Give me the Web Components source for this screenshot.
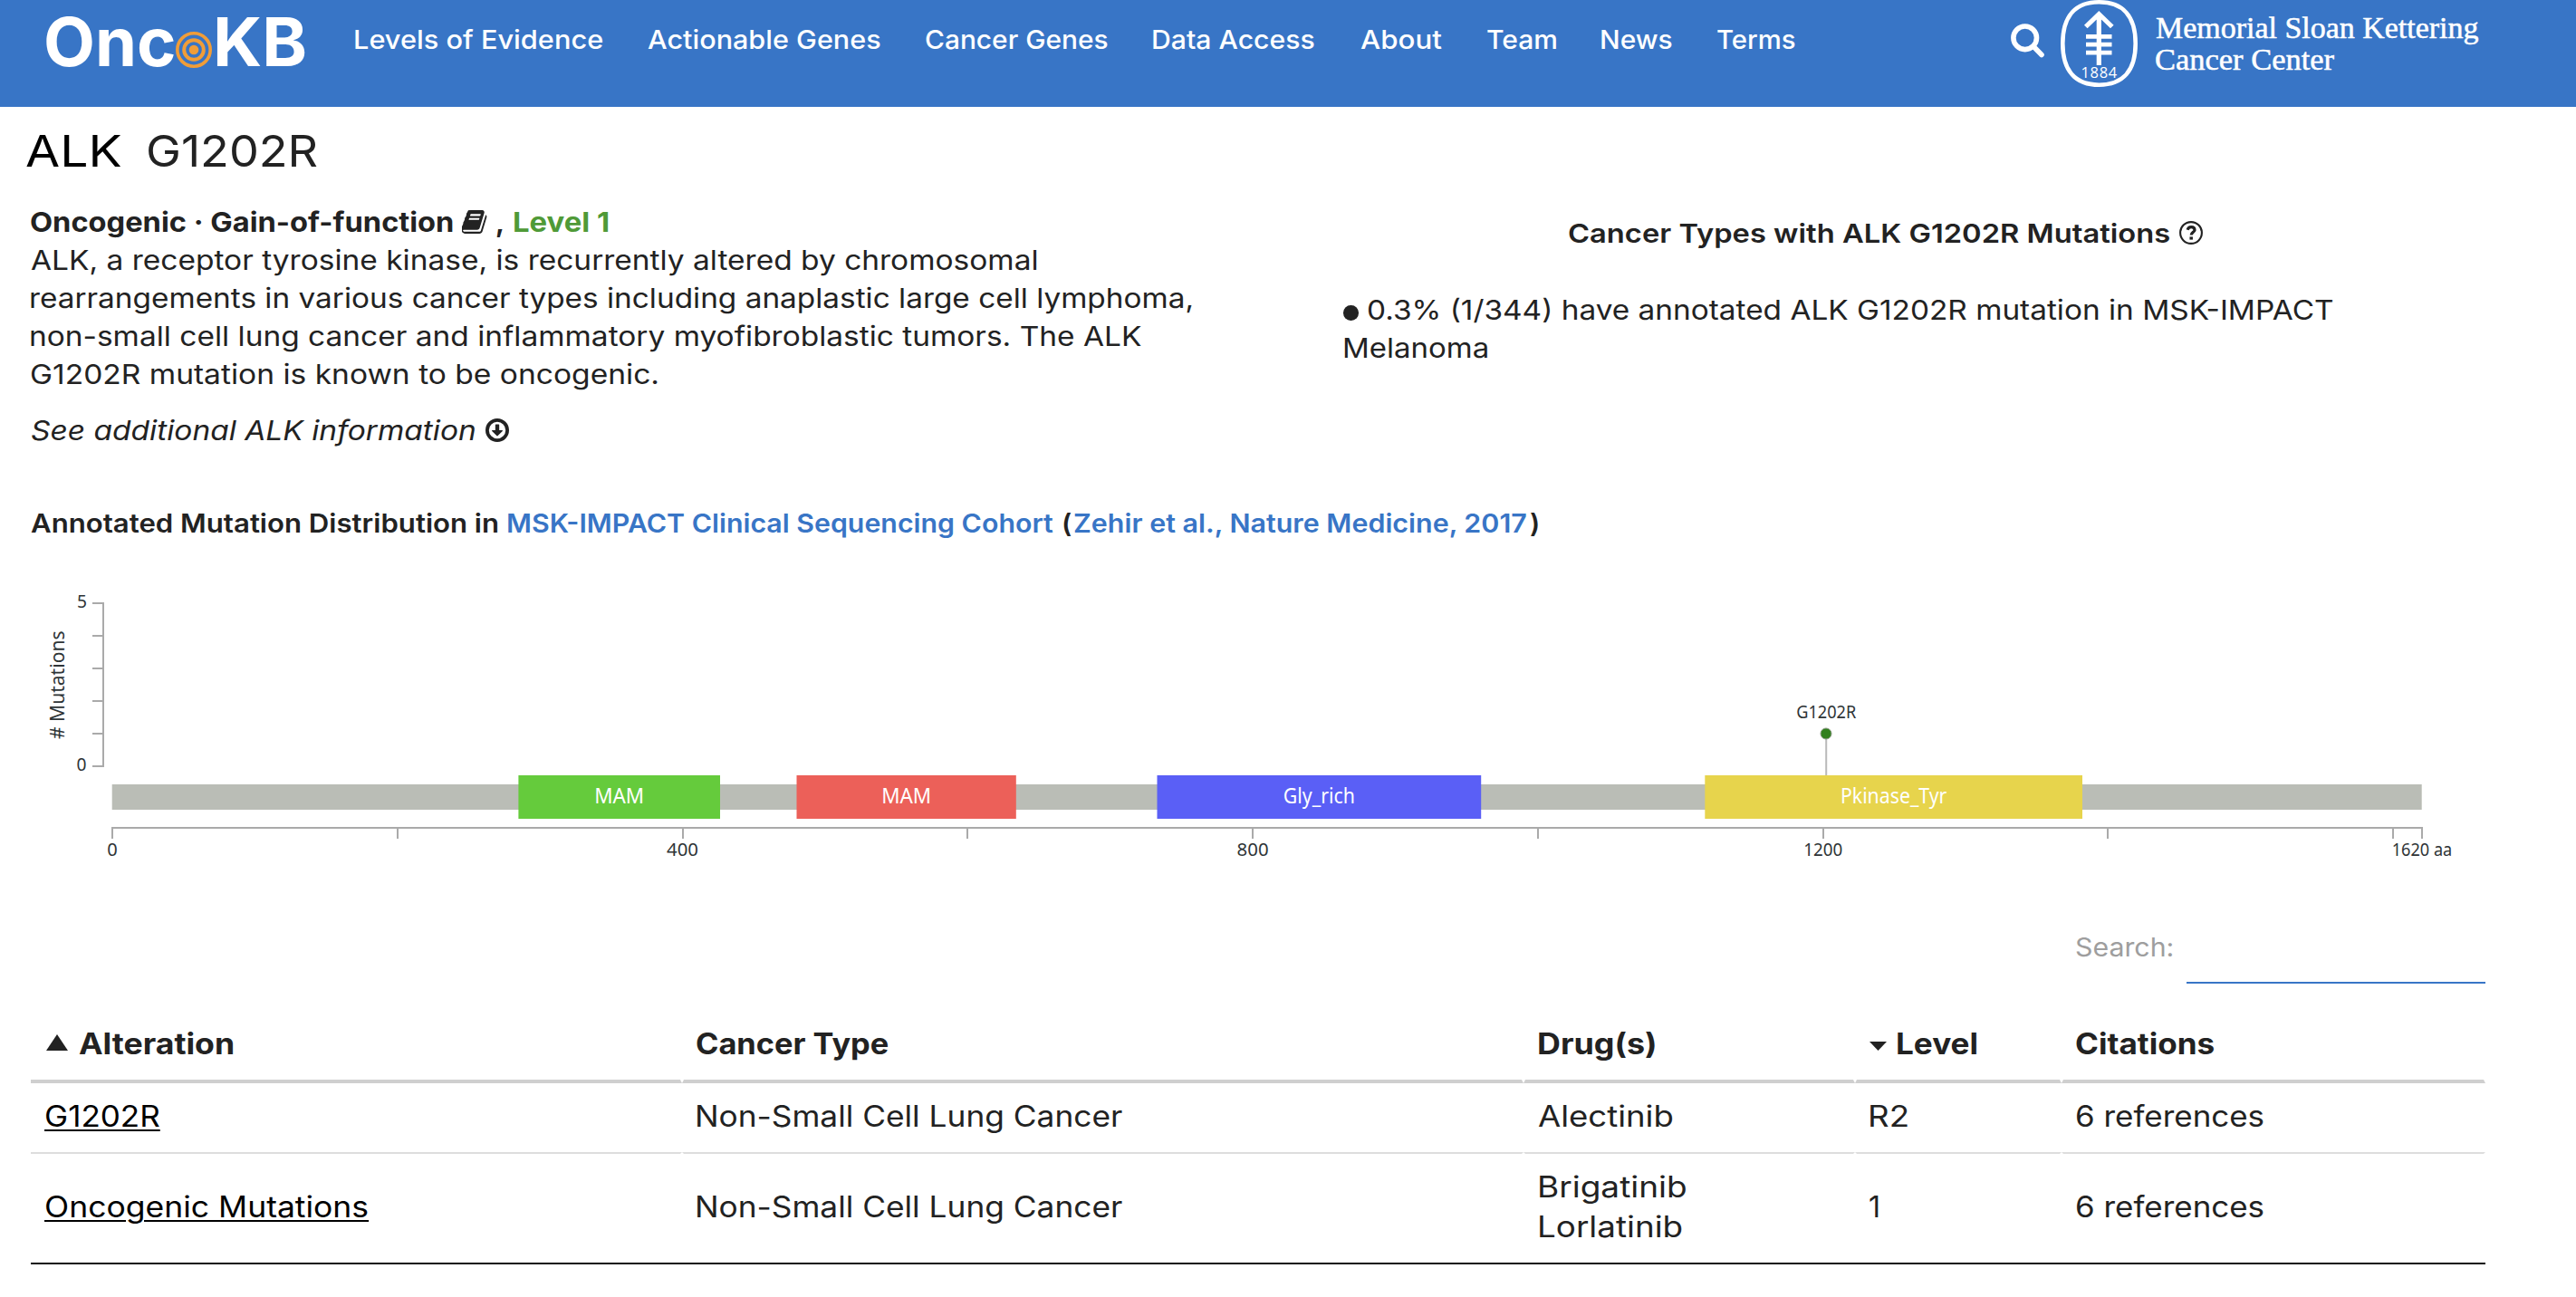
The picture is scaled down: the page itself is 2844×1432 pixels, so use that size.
<!DOCTYPE html>
<html lang="en">
<head>
<meta charset="utf-8">
<title>OncoKB - ALK G1202R</title>
<style>
  body { margin: 0; background: #fff; color: #222; font: 400 30px/42px Inter, "Open Sans", sans-serif; }
</style>
</head>
<body>
<okb-page></okb-page>

<template id="t-header">
  <style>
    :host { display: flex; align-items: flex-start; height: 118px; background: #3875c6; color: #fff; box-sizing: border-box; padding-left: 51px; }
    .logo { display: flex; align-items: flex-start; font: 700 74px/74px Inter, sans-serif; }
    .logo fit-text { margin-top: 9px; }
    .logo svg { margin: 35px 5.5px 0 1.5px; }
    nav { display: flex; gap: 50.2px; margin: 24px 0 0 55px; font: 500 29px/40px Inter, sans-serif; }
    .search { margin: 26px 0 0 238px; }
    .seal { margin-left: 18px; }
    .msk { margin: 14px 0 0 20px; font: 400 33px/35px "Liberation Serif", serif; -webkit-text-stroke: .5px #fff; }
    .msk fit-text { display: block; }
    svg { display: block; flex: none; }
  </style>
  <div class="logo">
    <fit-text w="141">Onc</fit-text>
    <svg width="40" height="40" viewBox="-20 -20 40 40" fill="none" stroke="#f09d38"><circle r="18.2" stroke-width="3.6"/><circle r="10.8" stroke-width="4"/><circle r="5.3" fill="#f09d38" stroke="none"/></svg>
    <fit-text w="98">KB</fit-text>
  </div>
  <nav>
    <fit-text w="273">Levels of Evidence</fit-text>
    <fit-text w="257">Actionable Genes</fit-text>
    <fit-text w="201">Cancer Genes</fit-text>
    <fit-text w="178">Data Access</fit-text>
    <fit-text w="90">About</fit-text>
    <fit-text w="76">Team</fit-text>
    <fit-text w="78">News</fit-text>
    <fit-text w="86">Terms</fit-text>
  </nav>
  <svg class="search" width="37" height="38" viewBox="0 0 37 38" fill="none" stroke="#fff" stroke-width="5.6" stroke-linecap="round"><circle cx="15.7" cy="15.8" r="12.8"/><path d="M25.5 25.8 34 34.5"/></svg>
  <svg class="seal" width="85" height="96" viewBox="0 0 85 96" fill="none" stroke="#fff">
    <path stroke-width="4.6" d="M42.5 2.3C69 2.3 82.7 18 82.7 48S69 93.7 42.5 93.7 2.3 78 2.3 48 16 2.3 42.5 2.3Z"/>
    <path stroke-width="5.2" d="M42.3 16V72M27.8 29.5 42.3 15.5 56.8 29.5"/>
    <path stroke-width="4.8" d="M28 40.4H56.5M28 49.2H56.5M28 58.2H56.5"/>
    <text x="22.6" y="86" textLength="39.5" font-family="Open Sans, sans-serif" font-size="16.5" fill="#fff" stroke="none">1884</text>
  </svg>
  <div class="msk"><fit-text w="356">Memorial Sloan Kettering</fit-text><fit-text w="197">Cancer Center</fit-text></div>
</template>

<template id="t-summary">
  <style>
    :host { display: flex; align-items: flex-start; justify-content: space-between; padding: 27.5px 100px 0 34px; }
    .left { width: 1290px; }
    .left fit-text { display: block; }
    .row { display: flex; align-items: flex-start; }
    .bold { font-weight: 700; }
    .level { color: #4f9a37; }
    .more { margin-top: 20px; font-style: italic; }
    .right { width: 1261px; padding-top: 12px; }
    .heading { justify-content: center; margin: 0 63px 42px 0; font-weight: 600; font-size: 29px; }
    .heading fit-text { margin-top: .5px; }
    svg { flex: none; display: block; }
    .dot { width: 16.5px; height: 16.5px; border-radius: 50%; background: #222; margin: 16.5px 10.5px 0 0; }
  </style>
  <div class="left">
    <div class="row bold">
      <fit-text w="465.5">Oncogenic · Gain-of-function</fit-text>
      <svg style="margin:8px 10px 0 10.5px" width="28" height="26" viewBox="62 128 1620 1536" fill="#222"><path d="M1639 478q40 57 18 129l-275 906q-19 64-76.5 107.5t-122.5 43.5h-923q-77 0-148.5-53.5t-99.5-131.5q-24-67-2-127 0-4 3-27t4-37q1-8-3-21.5t-3-19.5q2-11 8-21t16.5-23.5 16.5-23.5q23-38 45-91.5t30-91.5q3-10 .5-30t-.5-28q3-11 17-28t17-23q21-36 42-92t25-90q1-9-2.5-32t.5-28q4-13 22-30.5t22-22.5q19-26 42.5-84.5t27.5-96.5q1-8-3-25.5t-2-26.5q2-8 9-18t18-23 17-21q8-12 16.5-30.5t15-35 16-36 19.5-32 26.5-23.5 36-11.5 47.5 5.5l-1 3q38-9 51-9h761q74 0 114 56t18 130l-274 906q-36 119-71.5 153.5t-128.5 34.5h-869q-27 0-38 15-11 16-1 43 24 70 144 70h923q29 0 56-15.5t35-41.5l300-987q7-22 5-57 38 15 59 43zm-1064 2q-4 13 2 22.5t20 9.5h608q13 0 25.5-9.5t16.5-22.5l21-64q4-13-2-22.5t-20-9.5h-608q-13 0-25.5 9.5t-16.5 22.5zm-83 256q-4 13 2 22.5t20 9.5h608q13 0 25.5-9.5t16.5-22.5l21-64q4-13-2-22.5t-20-9.5h-608q-13 0-25.5 9.5t-16.5 22.5z"/></svg>
      <fit-text w="7" style="margin-right:12.5px">,</fit-text>
      <fit-text class="level" w="104">Level 1</fit-text>
    </div>
    <fit-text w="1110">ALK, a receptor tyrosine kinase, is recurrently altered by chromosomal</fit-text>
    <fit-text w="1282">rearrangements in various cancer types including anaplastic large cell lymphoma,</fit-text>
    <fit-text w="1226">non-small cell lung cancer and inflammatory myofibroblastic tumors. The ALK</fit-text>
    <fit-text w="692">G1202R mutation is known to be oncogenic.</fit-text>
    <div class="row more">
      <fit-text w="491">See additional ALK information</fit-text>
      <svg style="margin:8px 0 0 11px" width="26" height="26" viewBox="0 128 1536 1536"><circle cx="768" cy="896" r="656" fill="none" stroke="#222" stroke-width="224"/><path fill="#222" d="M1120 928q0 12-10 24l-319 319q-11 9-23 9t-23-9l-320-320q-15-16-7-35 8-20 30-20h192v-352q0-14 9-23t23-9h192q14 0 23 9t9 23v352h192q14 0 23 9t9 23z"/></svg>
    </div>
  </div>
  <div class="right">
    <div class="row heading">
      <fit-text w="663">Cancer Types with ALK G1202R Mutations</fit-text>
      <svg style="margin:8px 0 0 11.5px" width="26" height="26" viewBox="-13 -13 26 26" fill="none" stroke="#222"><circle r="11.9" stroke-width="2.1"/><path d="M-3.9-3.2C-3.3-5.2-1.9-6.3.2-6.3 2.5-6.3 4-5 4-3.1 4-.9.2-.3.2 2.6" stroke-width="3.2"/><path d="M.2 4.400V7.6" stroke-width="3.5"/></svg>
    </div>
    <div class="row"><span class="dot"></span><fit-text w="1065">0.3% (1/344) have annotated ALK G1202R mutation in MSK-IMPACT</fit-text></div>
    <fit-text w="158" style="margin-left:1.5px">Melanoma</fit-text>
  </div>
</template>

<template id="t-plot">
  <style>
    :host { display: block; }
    .caption { display: flex; padding: 61px 0 0 34px; font-weight: 600; font-size: 28.5px; }
    .link { color: #3875c6; }
    svg { display: block; margin-top: 31px; font: 400 20px "Noto Sans", "Open Sans", sans-serif; fill: #2e3436; }
  </style>
  <div class="caption">
    <fit-text w="515.5">Annotated Mutation Distribution in</fit-text>
    <fit-text class="link" w="601.5" style="margin-left:12px">MSK-IMPACT Clinical Sequencing Cohort</fit-text>
    <fit-text w="8.5" style="margin-left:11px">(</fit-text>
    <fit-text class="link" w="500.5" style="margin-left:3.5px">Zehir et al., Nature Medicine, 2017</fit-text>
    <fit-text w="8.5" style="margin-left:4px">)</fit-text>
  </div>
  <svg width="2844" height="340" viewBox="0 630 2844 340"></svg>
</template>

<template id="t-table">
  <style>
    :host { display: block; padding: 54px 0 0 34px; width: 2710px; }
    .search { display: flex; justify-content: flex-end; gap: 16px; height: 62px; color: #9e9e9e; font-size: 28px; }
    .search fit-text { margin-top: 1px; }
    .field { width: 330px; border-bottom: 2px solid #3875c6; box-sizing: border-box; }
    .row { display: grid; grid-template-columns: 719px 929px 366px 228px 468px; font-size: 32px; line-height: 44px; }
    .row > div { box-sizing: border-box; border: 0 solid transparent; border-width: 0 2px; padding-left: 14px; display: flex; flex-direction: column; justify-content: center; align-items: flex-start; }
    .row > div:first-child { border-left-width: 0; padding-left: 16px; }
    .head > div { height: 110px; flex-direction: row; justify-content: flex-start; align-items: flex-start; padding-top: 45px; border-bottom: 4px solid #cfcfcf; font-weight: 700; }
    .r1 > div { height: 76px; padding-bottom: 2px; }
    .r2 > div { height: 122px; padding-bottom: 3px; border-top: 2px solid #ddd; }
    .r2 { border-bottom: 2px solid #111; }
    fit-text.u { color: #000; --deco: underline; }
    svg { display: block; flex: none; fill: #222; }
  </style>
  <div class="search"><fit-text w="106">Search:</fit-text><div class="field"></div></div>
  <div class="row head">
    <div><svg style="margin:11px 12px 0 1px" width="24" height="18"><path d="M12 0 24 18H0Z"/></svg><fit-text w="170">Alteration</fit-text></div>
    <div><fit-text w="211">Cancer Type</fit-text></div>
    <div><fit-text style="margin-left:1px" w="128">Drug(s)</fit-text></div>
    <div><svg style="margin:19px 12px 0 0" width="19" height="10"><path d="M0 0H19L9.500 10Z"/></svg><fit-text w="87">Level</fit-text></div>
    <div><fit-text w="152">Citations</fit-text></div>
  </div>
  <div class="row r1">
    <div><fit-text class="u" w="126">G1202R</fit-text></div>
    <div><fit-text w="470">Non-Small Cell Lung Cancer</fit-text></div>
    <div><fit-text w="148">Alectinib</fit-text></div>
    <div><fit-text w="42">R2</fit-text></div>
    <div><fit-text w="207">6 references</fit-text></div>
  </div>
  <div class="row r2">
    <div><fit-text class="u" w="356">Oncogenic Mutations</fit-text></div>
    <div><fit-text w="470">Non-Small Cell Lung Cancer</fit-text></div>
    <div><fit-text style="margin-left:1px" w="161.500">Brigatinib</fit-text><fit-text style="margin-left:1px" w="157">Lorlatinib</fit-text></div>
    <div><fit-text w="10">1</fit-text></div>
    <div><fit-text w="207">6 references</fit-text></div>
  </div>
</template>

<template id="t-page">
  <style>
    :host { display: block; width: 2844px; height: 1432px; overflow: hidden; }
    h1 { display: flex; gap: 30px; margin: 0; padding: 18.5px 0 0 29.5px; font: 400 48px/60px Inter, sans-serif; }
    .gene { color: #000; }
  </style>
  <okb-header></okb-header>
  <h1><fit-text class="gene" w="104">ALK</fit-text><fit-text w="187">G1202R</fit-text></h1>
  <okb-summary></okb-summary>
  <okb-lollipop-plot></okb-lollipop-plot>
  <okb-evidence-table></okb-evidence-table>
</template>

<script>
  const pen = document.createElement('canvas').getContext('2d');

  // Text run whose inked width is set by its "w" attribute.
  class FitText extends HTMLElement {
    constructor() {
      super();
      this.attachShadow({ mode: 'open' }).innerHTML =
        '<style>:host{display:block;flex:none;white-space:pre}' +
        'span{display:inline-block;vertical-align:top;transform-origin:0 0;' +
        'text-decoration:var(--deco,none);text-decoration-thickness:2px;text-underline-offset:3px}</style><span><slot></slot></span>';
    }
    connectedCallback() {
      const cs = getComputedStyle(this);
      const w = parseFloat(this.getAttribute('w'));
      pen.font = `${cs.fontStyle} ${cs.fontWeight} ${cs.fontSize} ${cs.fontFamily}`;
      const m = pen.measureText(this.textContent);
      const s = w / (m.actualBoundingBoxLeft + m.actualBoundingBoxRight);
      const span = this.shadowRoot.querySelector('span');
      span.style.transform = `scaleX(${s})`;
      span.style.marginLeft = m.actualBoundingBoxLeft * s + 'px';
      this.style.width = w + 'px';
    }
  }

  class FromTemplate extends HTMLElement {
    constructor() {
      super();
      this.attachShadow({ mode: 'open' })
        .append(document.getElementById(this.constructor.template).content.cloneNode(true));
    }
  }
  class OkbPage extends FromTemplate { static template = 't-page'; }
  class OkbHeader extends FromTemplate { static template = 't-header'; }
  class OkbSummary extends FromTemplate { static template = 't-summary'; }
  class OkbTable extends FromTemplate { static template = 't-table'; }

  class OkbPlot extends FromTemplate {
    static template = 't-plot';
    connectedCallback() {
      const x = aa => 124 + aa * 1.5739;
      const rect = (l, t, w, h, c) => `<rect x="${l}" y="${t}" width="${w}" height="${h}" fill="${c}"/>`;
      const text = (cx, y, w, s, extra = '') =>
        `<text x="${cx - w / 2}" y="${y}" textLength="${w}" lengthAdjust="spacingAndGlyphs" ${extra}>${s}</text>`;
      const axis = '#aaa';
      let out = rect(113, 665, 2, 182, axis);
      for (let i = 0; i < 6; i++) out += rect(102, 665 + 36 * i, 12, 2, axis);
      out += text(90.5, 671, 11, '5') + text(90, 851, 11, '0');
      out += '<text transform="translate(71 816) rotate(-90)" font-size="22" textLength="119.500" lengthAdjust="spacingAndGlyphs"># Mutations</text>';
      out += rect(2015.2, 810, 2, 47, '#bababa') + '<circle cx="2016" cy="810" r="6" fill="#31801d" stroke="#8a9a84" stroke-width="1"/>';
      out += text(2016.2, 793, 66, 'G1202R');
      out += rect(123.7, 866, 2550, 28, '#babdb6');
      const domains = [[572.4, 795, '#65cb3c', 'MAM', 55], [879.5, 1121.8, '#ec6059', 'MAM', 55],
        [1277.5, 1635.2, '#5a5ff6', 'Gly_rich', 79], [1882.3, 2299, '#e7d44c', 'Pkinase_Tyr', 117.5]];
      for (const [a, b, c, name, w] of domains)
        out += rect(a, 856, b - a, 48, c) + text((a + b) / 2, 887, w, name, 'fill="#fff" font-size="23.5"');
      out += rect(123, 913, 2551.5, 2, axis);
      for (const aa of [0, 200, 400, 600, 800, 1000, 1200, 1400, 1600, 1620])
        out += rect(Math.round(x(aa) - 1), 913, 2, 13, axis);
      for (const [aa, w] of [[0, 11.5], [400, 35], [800, 35], [1200, 43]]) out += text(x(aa), 945, w, aa);
      out += text(2674, 945, 66.5, '1620 aa');
      this.shadowRoot.querySelector('svg').innerHTML = out;
    }
  }

  customElements.define('okb-header', OkbHeader);
  customElements.define('okb-summary', OkbSummary);
  customElements.define('okb-lollipop-plot', OkbPlot);
  customElements.define('okb-evidence-table', OkbTable);
  customElements.define('okb-page', OkbPage);
  customElements.define('fit-text', FitText);
</script>
</body>
</html>
